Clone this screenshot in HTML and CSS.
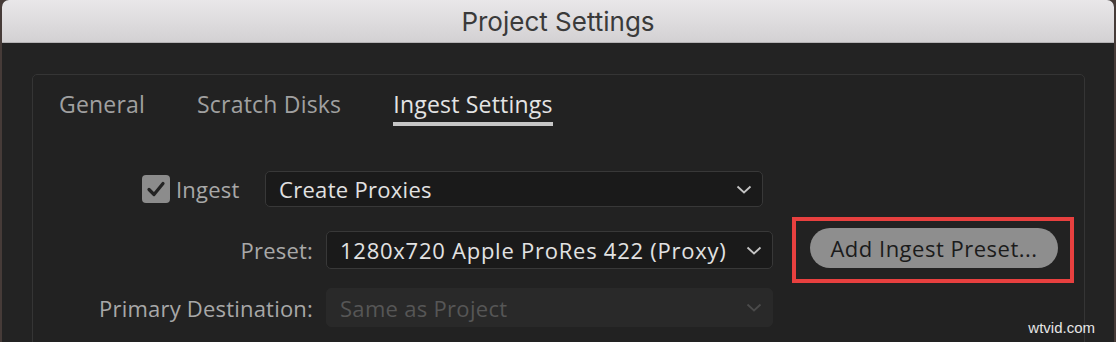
FILE: index.html
```html
<!DOCTYPE html>
<html lang="en">

<head>
  <meta charset="UTF-8">
  <title>Project Settings</title>
  <link rel="stylesheet" href="styles.css">
</head>

<body>
  <div class="window">
    <div class="titlebar">Project Settings</div>
    <div class="content">
      <div class="panel">
        <div class="tabs">
          <div class="tab">General</div>
          <div class="tab">Scratch Disks</div>
          <div class="tab active">Ingest Settings</div>
        </div>

        <div class="row row-ingest">
          <div class="check">
            <svg width="28" height="28" viewBox="0 0 28 28">
              <path d="M7 14.5 L12 19.5 L21 8.5" fill="none" stroke="#232323" stroke-width="3.2" stroke-linecap="round" stroke-linejoin="round" />
            </svg>
          </div>
          <span class="label">Ingest</span>
          <div class="select select-ingest">
            <span>Create Proxies</span>
            <svg class="chevron" width="16" height="9" viewBox="0 0 16 9">
              <path d="M1.5 1.5 L8 7.5 L14.5 1.5" fill="none" stroke="currentColor" stroke-width="1.8" />
            </svg>
          </div>
        </div>

        <div class="row row-preset">
          <span class="label field-label">Preset:</span>
          <div class="select select-preset">
            <span>1280x720 Apple ProRes 422 (Proxy)</span>
            <svg class="chevron" width="16" height="9" viewBox="0 0 16 9">
              <path d="M1.5 1.5 L8 7.5 L14.5 1.5" fill="none" stroke="currentColor" stroke-width="1.8" />
            </svg>
          </div>
          <div class="highlight">
            <button class="pill">Add Ingest Preset...</button>
          </div>
        </div>

        <div class="row row-dest">
          <span class="label field-label">Primary Destination:</span>
          <div class="select disabled">
            <span>Same as Project</span>
            <svg class="chevron" width="16" height="9" viewBox="0 0 16 9">
              <path d="M1.5 1.5 L8 7.5 L14.5 1.5" fill="none" stroke="currentColor" stroke-width="1.8" />
            </svg>
          </div>
        </div>
      </div>
      <div class="watermark">wtvid.com</div>
    </div>
  </div>
</body>

</html>
```

FILE: styles.css
```css
body {
  margin: 0;
  padding: 0 2px;
  height: 342px;
  overflow: hidden;
  background: #463b38;
  font-family: "Open Sans", "Noto Sans", sans-serif;
}

.window {
  height: 342px;
  border-radius: 7px 7px 0 0;
  overflow: hidden;
  background: #232323;
}

.titlebar {
  height: 42px;
  border-bottom: 1px solid #b4b2b4;
  background: linear-gradient(#e9e7e9, #d3d1d3);
  color: #3a3a3a;
  font-family: "Inter", "Open Sans", sans-serif;
  font-size: 26px;
  line-height: 43px;
  text-align: center;
}

.content {
  position: relative;
  height: 299px;
  padding: 31px 29px 0 30px;
  box-sizing: border-box;
}

.panel {
  height: 300px;
  border: 1px solid #353535;
  border-radius: 5px;
  background: #222222;
}

.tabs {
  display: flex;
  gap: 52px;
  padding: 14px 0 0 26px;
}

.tab {
  font-size: 23px;
  font-weight: 500;
  letter-spacing: 0.2px;
  line-height: 30px;
  color: #a0a0a0;
  padding-bottom: 3px;
  border-bottom: 4px solid transparent;
}

.tab.active {
  color: #e4e4e4;
  border-bottom-color: #c6c6c6;
}

.row {
  display: flex;
  align-items: center;
}

.label {
  font-size: 22px;
  font-weight: 500;
  letter-spacing: 0.2px;
  color: #a8a8a8;
}

.field-label {
  width: 280px;
  text-align: right;
  margin-right: 13px;
}

.row-ingest {
  margin-top: 45px;
  padding-left: 109px;
}

.row-ingest .label {
  width: 64px;
  margin-left: 6px;
  margin-right: 25px;
}

.check {
  width: 28px;
  height: 28px;
  border-radius: 4px;
  background: #8c8c8c;
}

.check svg {
  display: block;
}

.select {
  display: flex;
  align-items: center;
  justify-content: space-between;
  box-sizing: border-box;
  width: 447px;
  height: 38px;
  padding: 0 10px 0 13px;
  border: 1px solid #383838;
  border-radius: 5px;
  background: #1a1a1a;
  color: #e2e2e2;
  font-size: 22px;
  font-weight: 500;
  letter-spacing: 0.3px;
}

.select-ingest {
  width: 498px;
  height: 36px;
}

.select-preset {
  letter-spacing: 0.75px;
}

.chevron {
  color: #c4c4c4;
}

.select.disabled {
  height: 39px;
  border-color: #292929;
  background: #292929;
  color: #565656;
}

.select.disabled .chevron {
  color: #4a4a4a;
}

.row-preset {
  margin-top: 10px;
}

.highlight {
  margin-left: 19px;
  padding: 7px 12px 11px 14px;
  border: 4px solid #e8403f;
}

.pill {
  width: 248px;
  height: 40px;
  border: none;
  border-radius: 20px;
  background: #8e8e8e;
  color: #1b1b1b;
  font-family: "Open Sans", "Noto Sans", sans-serif;
  font-size: 22px;
  font-weight: 500;
  letter-spacing: 0.5px;
}

.row-dest {
  margin-top: 5px;
}

.watermark {
  position: absolute;
  right: 19px;
  bottom: 6px;
  font-family: "Liberation Sans", sans-serif;
  font-size: 15px;
  color: #e6e6e6;
}
```
